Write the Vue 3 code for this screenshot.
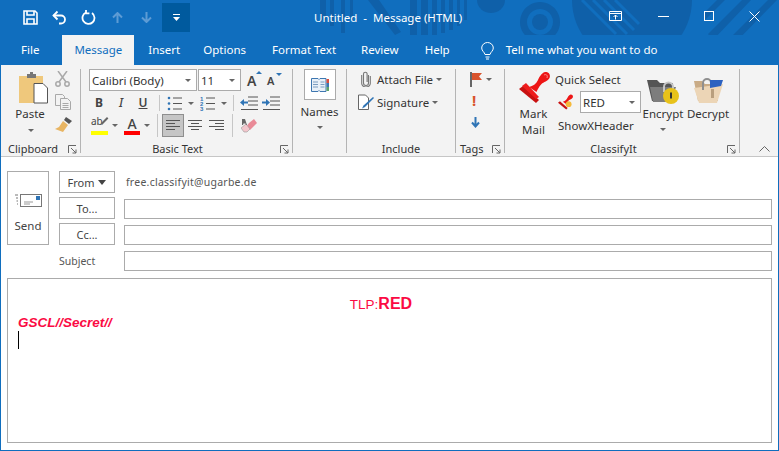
<template>
  <div class="window">
    <header class="titlebar">
      <svg class="pattern" viewBox="0 0 779 65" fill="#0f60a9">
        <rect x="320" y="0" width="6" height="20" />
        <rect x="330" y="0" width="4" height="26" />
        <rect x="341" y="0" width="4" height="33" />
        <rect x="350" y="0" width="3" height="20" />
        <path d="M368 0h11l22 32-6 3z" />
        <rect x="410" y="0" width="7" height="36" />
        <rect x="421" y="0" width="7" height="37" />
        <rect x="432" y="0" width="5" height="35" />
        <rect x="441" y="0" width="4" height="33" />
        <rect x="449" y="0" width="4" height="30" />
        <rect x="457" y="0" width="3" height="26" />
        <rect x="464" y="0" width="3" height="20" />
        <path d="M477 0h28a14 13 0 0 1-28 0z" />
        <path d="M540 2a20 20 0 1 0 .01 0zm0 7a13 13 0 1 1-.01 0z" />
        <circle cx="540" cy="22" r="8" />
        <path d="M572 0h120a60 62 0 0 1-120 0z" />
        <g stroke="#106ebe" stroke-width="3" fill="none">
          <path d="M582 0l34 34M593 0l34 34M604 0l30 30M615 0l24 24" />
        </g>
        <path d="M704 13l13-13h8l-21 21zM708 34l34-34h9l-38 40zM728 40l40-40h9l-44 45z" />
      </svg>

      <div class="qat">
        <svg class="qat-icon" width="15" height="15" viewBox="0 0 15 15" fill="none" stroke="#fff" stroke-width="1.6">
          <path d="M1 1h11l2 2v11H1z" />
          <path d="M4 1v4h7V1M4 14V9h7v5" />
        </svg>
        <svg class="qat-icon" width="15" height="15" viewBox="0 0 15 15" fill="none" stroke="#fff" stroke-width="1.8">
          <path d="M5.500 1.500L1.500 5.500l4 4" />
          <path d="M1.500 5.500h7.500a4 4 0 0 1 0 8h-2" />
        </svg>
        <svg class="qat-icon" width="15" height="15" viewBox="0 0 15 15" fill="none" stroke="#fff" stroke-width="1.8">
          <path d="M5 2.500a6 6 0 1 0 6 .6" />
          <path d="M5 0v3.400h3.400" />
        </svg>
        <svg class="qat-icon dim first-dim" width="11" height="11" viewBox="0 0 11 11" fill="none" stroke="#5d9bd4" stroke-width="2">
          <path d="M1 5.500l4.500-4.500 4.500 4.500M5.500 1v10" />
        </svg>
        <svg class="qat-icon dim" width="11" height="11" viewBox="0 0 11 11" fill="none" stroke="#5d9bd4" stroke-width="2">
          <path d="M1 5.500l4.500 4.500 4.500-4.500M5.500 10V0" />
        </svg>
        <div class="qat-more">
          <svg width="7" height="7" viewBox="0 0 7 7" fill="#fff">
            <rect x="0" y="0" width="7" height="1" />
            <path d="M0 3h7L3.500 7z" />
          </svg>
        </div>
      </div>

      <div class="doc-title">Untitled&nbsp; -&nbsp; Message (HTML)</div>

      <div class="win-controls">
        <svg width="14" height="10" viewBox="0 0 14 10" fill="none" stroke="#fff">
          <path d="M.5.500h12v9H.5zM.5 2.500h12M6.500 8.500V4M4.500 6l2-2 2 2" />
        </svg>
        <svg class="ctrl-min" width="11" height="1" viewBox="0 0 11 1"><rect width="11" height="1" fill="#fff" /></svg>
        <svg class="ctrl-max" width="10" height="10" viewBox="0 0 10 10" fill="none" stroke="#fff"><rect x=".5" y=".5" width="9" height="9" /></svg>
        <svg class="ctrl-close" width="11" height="11" viewBox="0 0 11 11" stroke="#fff"><path d="M.5.500l10 10M10.500.500l-10 10" /></svg>
      </div>
    </header>

    <nav class="tabs">
      <span v-for="t in tabs" :key="t" class="tab" :class="{ active: t === 'Message' }">{{ t }}</span>
      <svg class="bulb" width="13" height="18" viewBox="0 0 13 18" fill="none" stroke="#fff">
        <path d="M4 12.500C3.500 10 .7 9 .7 6a5.800 5.500 0 0 1 11.600 0c0 3-2.800 4-3.300 6.500zM4.500 15h4M5 17h3" />
      </svg>
      <span class="tell">Tell me what you want to do</span>
    </nav>

    <section class="ribbon">
      <!-- Clipboard -->
      <div class="group g-clip">
        <div class="group-body clip-body">
          <div class="paste">
            <svg width="29" height="32" viewBox="0 0 29 32">
              <path d="M0 4h24v27H0z" fill="#efc87c" />
              <path d="M8 2h3V0h3v2h3v4H8z" fill="#777" />
              <path d="M15 11.500h9l4.500 4.500v15H15z" fill="#fff" stroke="#555" />
            </svg>
            <span class="big-label">Paste</span>
            <i class="caret paste-caret"></i>
          </div>
          <div class="clip-tools">
            <svg width="15" height="16" viewBox="0 0 15 16" fill="none" stroke="#a9a9a9" stroke-width="1.500">
              <path d="M3 0l8 11M12 0L4 11" />
              <circle cx="3" cy="13" r="2.200" />
              <circle cx="12" cy="13" r="2.200" />
            </svg>
            <svg width="16" height="16" viewBox="0 0 16 16" fill="#f3f3f3" stroke="#a9a9a9">
              <path d="M.5.500h7l2 2v9h-9z" />
              <path d="M5.500 4.500h7l3 3v8h-10z" />
              <path d="M7.500 9.500h6M7.500 11.500h6M7.500 13.500h6" />
            </svg>
            <svg width="17" height="16" viewBox="0 0 17 16">
              <path d="M11 0l6 4-3 3-5-4z" fill="#555" />
              <path d="M8 4l5 4-5 7-8-3 4-2z" fill="#e8b563" />
            </svg>
          </div>
        </div>
        <div class="group-label">
          <span class="clip-label">Clipboard</span>
          <svg class="launcher" width="9" height="9" viewBox="0 0 9 9" fill="none" stroke="#666"><path d="M.5 8V.5H8M3 3l5 5M4.500 8H8V4.500" /></svg>
        </div>
      </div>

      <!-- Basic Text -->
      <div class="group g-text">
        <div class="group-body text-body">
          <div class="text-row row-font">
            <div class="combo font-combo"><span>Calibri (Body)</span><i class="caret"></i></div>
            <div class="combo size-combo"><span>11</span><i class="caret"></i></div>
            <span class="grow">A<i class="mini-up"></i></span>
            <span class="shrink">A<i class="mini-down"></i></span>
          </div>
          <div class="text-row row-format">
            <b class="fmt">B</b>
            <i class="fmt fmt-i">I</i>
            <u class="fmt fmt-u">U</u>
            <span class="vsep sep-a"></span>
            <svg class="list-ic" width="15" height="15" viewBox="0 0 15 15">
              <g fill="#2f74b5"><circle cx="2" cy="2" r="1.300" /><circle cx="2" cy="7.500" r="1.300" /><circle cx="2" cy="13" r="1.300" /></g>
              <path d="M6 2h9M6 7.500h9M6 13h9" stroke="#555" />
            </svg>
            <i class="caret c-list"></i>
            <svg class="num-ic" width="15" height="15" viewBox="0 0 15 15">
              <g fill="#2f74b5" font-size="6" font-family="Liberation Sans, sans-serif" font-weight="700">
                <text x="0" y="5">1</text>
                <text x="0" y="10">2</text>
                <text x="0" y="15">3</text>
              </g>
              <path d="M6 2h9M6 7.500h9M6 13h9" stroke="#555" />
            </svg>
            <i class="caret c-num"></i>
            <span class="vsep sep-b"></span>
            <svg class="out-ic" width="18" height="15" viewBox="0 0 18 15">
              <path d="M8 1h10M8 5h10M8 9h10M1 13.500h17" stroke="#555" />
              <path d="M0 6.500l4-3.500v2.500h4v2H4V10z" fill="#2f74b5" />
            </svg>
            <svg class="in-ic" width="18" height="15" viewBox="0 0 18 15">
              <path d="M8 1h10M8 5h10M8 9h10M1 13.500h17" stroke="#555" />
              <path d="M8 6.500L4 3v2.500H0v2h4V10z" fill="#2f74b5" />
            </svg>
          </div>
          <div class="text-row row-align">
            <span class="hl-ic">ab<i class="hl-pen"></i><i class="hl-bar"></i></span>
            <i class="caret c-hl"></i>
            <span class="color-ic">A<i class="color-bar"></i></span>
            <i class="caret c-color"></i>
            <span class="vsep sep-c"></span>
            <span class="align-btn">
              <svg width="14" height="11" viewBox="0 0 14 11" stroke="#555"><path d="M0 .5h14M0 3.500h9M0 6.500h14M0 9.500h9" /></svg>
            </span>
            <svg class="al-center" width="14" height="11" viewBox="0 0 14 11" stroke="#555"><path d="M0 .5h14M3 3.500h8M0 6.500h14M3 9.500h8" /></svg>
            <svg class="al-right" width="15" height="11" viewBox="0 0 15 11" stroke="#555"><path d="M0 .5h15M6 3.500h9M0 6.500h15M6 9.500h9" /></svg>
            <span class="vsep sep-d"></span>
            <svg class="eraser" width="16" height="15" viewBox="0 0 16 15">
              <path d="M8 5l5-4 3 4-7 7-4-3z" fill="#e98a97" />
              <path d="M0 10l5-4 4 5-3 3H3z" fill="#f3c6cc" stroke="#999" stroke-width=".6" />
              <path d="M1 1h3l2 6H5L4.500 5.500H2.500L2 7H1z" fill="#666" />
            </svg>
          </div>
        </div>
        <div class="group-label">
          <span class="text-label">Basic Text</span>
          <svg class="launcher" width="9" height="9" viewBox="0 0 9 9" fill="none" stroke="#666"><path d="M.5 8V.5H8M3 3l5 5M4.500 8H8V4.500" /></svg>
        </div>
      </div>

      <!-- Names -->
      <div class="group g-names">
        <div class="group-body names-body">
          <div class="names-btn">
            <svg width="18" height="14" viewBox="0 0 18 14">
              <path d="M.5.500h6.500l1 1 1-1h6v13h-6l-1-1-1 1H.5z" fill="#e8f0f8" stroke="#3d76b0" />
              <path d="M2 4h5M2 6.500h5M2 9h5M9.500 4h4M9.500 6.500h4M9.500 9h4" stroke="#7a9cc0" />
              <rect x="15.500" y="1" width="2.500" height="4" fill="#d94c3d" />
              <rect x="15.500" y="5" width="2.500" height="4" fill="#3d76b0" />
              <rect x="15.500" y="9" width="2.500" height="4" fill="#5fa36b" />
            </svg>
          </div>
          <span class="big-label names-label">Names</span>
          <i class="caret names-caret"></i>
        </div>
        <div class="group-label"></div>
      </div>

      <!-- Include -->
      <div class="group g-include">
        <div class="group-body include-body">
          <div class="inc-row">
            <svg class="clip-ic" width="10" height="16" viewBox="0 0 10 16" fill="none" stroke="#777" stroke-width="1.100">
              <path d="M7.500 4v8a2.500 2.500 0 0 1-5 0V3a1.800 1.800 0 0 1 3.600 0v8" />
              <path d="M9.300 5v7.500a4.300 3.500 0 0 1-8.600 0V4" />
            </svg>
            <span class="inc-text">Attach File</span>
            <i class="caret c-inc"></i>
          </div>
          <div class="inc-row sig-row">
            <svg class="sig-ic" width="16" height="16" viewBox="0 0 16 16">
              <path d="M.5 1h7l3 3v11.500H.5z" fill="#fff" stroke="#666" />
              <path d="M15 3l1 1-9 9-3 1.500L5.500 11.500z" fill="#2f74b5" />
            </svg>
            <span class="inc-text">Signature</span>
            <i class="caret c-inc"></i>
          </div>
        </div>
        <div class="group-label"><span>Include</span></div>
      </div>

      <!-- Tags -->
      <div class="group g-tags">
        <div class="group-body tags-body">
          <div class="flag-row">
            <svg width="13" height="15" viewBox="0 0 13 15">
              <rect width="2" height="15" fill="#666" />
              <path d="M2 1h10L9 4.500 12 8H2z" fill="#d9532c" />
            </svg>
            <i class="caret c-flag"></i>
          </div>
          <span class="bang">!</span>
          <svg class="low" width="9" height="11" viewBox="0 0 9 11" fill="none" stroke="#2f74b5" stroke-width="2">
            <path d="M1 5.500l3.500 4 3.500-4M4.500 9V0" />
          </svg>
        </div>
        <div class="group-label tags-label">
          <span>Tags</span>
          <svg class="launcher" width="9" height="9" viewBox="0 0 9 9" fill="none" stroke="#666"><path d="M.5 8V.5H8M3 3l5 5M4.500 8H8V4.500" /></svg>
        </div>
      </div>

      <!-- ClassifyIt -->
      <div class="group g-classify">
        <div class="group-body classify-body">
          <div class="mark">
            <svg width="31" height="31" viewBox="0 0 31 31">
              <path d="M0 17l4-3 16 14-3 3z" fill="#c81111" />
              <path d="M3 14l4-3 13 14-3 2z" fill="#ee1c1c" />
              <path d="M10 15c4-1 7-3 9-7 1-2 3-7 7-8 3-.5 6 2 4.500 6-1.500 3-6 4-8 6-3 3-4 6-5 8z" fill="#ed1515" />
              <path d="M25 3c2-1 4 0 3 3" stroke="#f88" fill="none" />
            </svg>
            <span class="big-label mark-label">Mark<br />Mail</span>
          </div>
          <div class="quick">
            <span class="quick-title">Quick Select</span>
            <div class="quick-row">
              <svg width="15" height="16" viewBox="0 0 31 31">
                <path d="M0 17l4-3 16 14-3 3z" fill="#c81111" />
                <path d="M10 15c4-1 7-3 9-7 1-2 3-7 7-8 3-.5 6 2 4.500 6-1.500 3-6 4-8 6-3 3-4 6-5 8z" fill="#ed1515" />
                <circle cx="22" cy="20" r="6" fill="#f5b93a" />
              </svg>
              <div class="combo red-combo"><span>RED</span><i class="caret"></i></div>
            </div>
            <span class="xheader">ShowXHeader</span>
          </div>
          <div class="crypt encrypt">
            <svg width="33" height="27" viewBox="0 0 33 27">
              <path d="M0 3h10l3 3h13v18H5z" fill="#555" />
              <path d="M3 10h26l-5 15H6z" fill="#7d7d7d" />
              <path d="M17 15v-5a4.500 4.500 0 0 1 9 0v5" fill="none" stroke="#c5c5c5" stroke-width="2" />
              <circle cx="24" cy="19" r="8" fill="#e8c21a" />
              <rect x="23" y="15.500" width="2" height="6" fill="#333" />
            </svg>
            <span class="big-label">Encrypt</span>
            <i class="caret crypt-caret"></i>
          </div>
          <div class="crypt decrypt">
            <svg width="31" height="27" viewBox="0 0 31 27">
              <path d="M1 4h8l3 3h13v17H5z" fill="#c9ab86" />
              <path d="M1 11l29-4-6 19H6z" fill="#ecd5b6" />
              <path d="M10 13V6a4 4 0 0 1 8 0v3" fill="none" stroke="#8f8f8f" stroke-width="2" />
              <path d="M17 3h13l-2 6-11 2z" fill="#2d62c0" />
              <rect x="18" y="12" width="3" height="9" fill="#b99f7e" />
            </svg>
            <span class="big-label">Decrypt</span>
          </div>
        </div>
        <div class="group-label classify-label">
          <span>ClassifyIt</span>
          <svg class="launcher" width="9" height="9" viewBox="0 0 9 9" fill="none" stroke="#666"><path d="M.5 8V.5H8M3 3l5 5M4.500 8H8V4.500" /></svg>
        </div>
      </div>

      <svg class="collapse" width="11" height="6" viewBox="0 0 11 6" fill="none" stroke="#666"><path d="M.5 5.500l5-5 5 5" /></svg>
    </section>

    <main class="compose">
      <div class="compose-head">
        <button class="send">
          <svg width="27" height="14" viewBox="0 0 27 14">
            <path d="M0 1h3M1 4h2M1.500 7h1.500M2 10h1" stroke="#777" />
            <rect x="5.500" y=".5" width="21" height="12" fill="#fff" stroke="#777" />
            <rect x="21" y="2" width="4" height="4" fill="#2f74b5" />
            <path d="M9 8h9M9 10h6" stroke="#999" />
          </svg>
          <span>Send</span>
        </button>
        <div class="fields">
          <button class="field-btn from-btn">From <i class="from-arrow"></i></button>
          <span class="from-addr">free.classifyit@ugarbe.de</span>
          <button class="field-btn">To...</button>
          <div class="field-input"></div>
          <button class="field-btn">Cc...</button>
          <div class="field-input"></div>
          <span class="subject">Subject</span>
          <div class="field-input"></div>
        </div>
      </div>
      <div class="mail-body">
        <p class="tlp">TLP:<b>RED</b></p>
        <p class="gscl">GSCL//Secret//</p>
        <span class="cursor"></span>
      </div>
    </main>
  </div>
</template>

<script setup>
const tabs = ['File', 'Message', 'Insert', 'Options', 'Format Text', 'Review', 'Help']
</script>

<style>
html, body { margin: 0; background: #fff; }
</style>

<style scoped>
.window {
  width: 779px;
  height: 451px;
  box-sizing: border-box;
  display: flex;
  flex-direction: column;
  border: 1px solid #106ebe;
  border-top: 0;
  font-family: "Noto Sans", "Open Sans", sans-serif;
  font-size: 11.5px;
  color: #333;
  overflow: hidden;
}

/* title bar */
.titlebar {
  position: relative;
  height: 35px;
  margin: 0 -1px;
  background: #106ebe;
  display: flex;
  align-items: flex-start;
  color: #fff;
}
.pattern {
  position: absolute;
  left: 0;
  top: 0;
  width: 779px;
  height: 65px;
}
.qat {
  position: relative;
  display: flex;
  align-items: center;
  height: 29px;
  margin-top: 3px;
  padding-left: 23px;
}
.qat-icon { margin-right: 14px; }
.qat-icon.first-dim { margin-left: 2px; margin-right: 18px; }
.qat-icon.dim:not(.first-dim) { margin-right: 10px; }
.qat-more {
  width: 28px;
  height: 29px;
  background: #005a9e;
  display: flex;
  align-items: center;
  justify-content: center;
}
.doc-title {
  position: relative;
  margin-left: 124px;
  line-height: 36px;
  font-size: 11.5px;
  white-space: nowrap;
}
.win-controls {
  position: relative;
  margin-left: auto;
  display: flex;
  align-items: flex-start;
  padding: 11px 19px 0 0;
}
.ctrl-min { margin: 5px 0 0 35px; }
.ctrl-max { margin-left: 35px; }
.ctrl-close { margin-left: 35px; }

/* tabs */
.tabs {
  position: relative;
  height: 30px;
  margin: 0 -1px;
  background: #106ebe;
  display: flex;
  align-items: stretch;
  padding-left: 8px;
  color: #fff;
  white-space: nowrap;
}
.tab {
  padding: 0 13px;
  line-height: 30px;
  font-size: 11.5px;
}
.tab:nth-child(1) { margin-right: 10px; }
.tab:nth-child(2) { padding: 0 12px; }
.tab:nth-child(3) { padding: 0 10px 0 14px; }
.tab:nth-child(5) { padding-right: 12px; }
.tab.active {
  background: #f3f3f3;
  color: #106ebe;
}
.bulb { margin: 7px 0 0 18px; }
.tell {
  margin-left: 12px;
  line-height: 30px;
  font-size: 11.5px;
}

/* ribbon */
.ribbon {
  position: relative;
  height: 92px;
  flex: none;
  box-sizing: border-box;
  display: flex;
  padding-top: 4px;
  background: #f3f3f3;
  border-bottom: 1px solid #c6c6c6;
}
.group {
  box-sizing: border-box;
  height: 84px;
  border-right: 1px solid #b4b4b4;
  display: flex;
  flex-direction: column;
  flex: none;
}
.g-clip { width: 80px; }
.g-text { width: 212px; }
.g-names { width: 54px; }
.g-include { width: 109px; }
.g-tags { width: 49px; }
.g-classify { width: 235px; }
.group-body { height: 70px; flex: none; box-sizing: border-box; }
.group-label {
  position: relative;
  height: 20px;
  line-height: 20px;
  text-align: center;
  font-size: 11px;
  white-space: nowrap;
}
.launcher {
  position: absolute;
  right: 3px;
  top: 6px;
}
.big-label {
  display: block;
  text-align: center;
  white-space: nowrap;
  line-height: 16px;
}
.caret {
  display: inline-block;
  width: 0;
  height: 0;
  border-left: 3px solid transparent;
  border-right: 3px solid transparent;
  border-top: 3px solid #666;
}

/* clipboard */
.clip-body { display: flex; padding-left: 17px; }
.paste {
  width: 30px;
  display: flex;
  flex-direction: column;
  align-items: center;
  padding-top: 3px;
}
.paste .big-label { margin-top: 2px; margin-left: -6px; }
.paste-caret { margin: 7px 0 0 -4px; }
.clip-tools {
  display: flex;
  flex-direction: column;
  gap: 7px;
  margin-left: 7px;
  padding-top: 2px;
}
.clip-label { position: absolute; left: 7px; }

/* basic text */
.text-body { padding-left: 8px; }
.text-row { display: flex; align-items: center; }
.row-font { height: 22px; }
.combo {
  box-sizing: border-box;
  display: flex;
  align-items: center;
  justify-content: space-between;
  background: #fff;
  border: 1px solid #ababab;
  padding: 0 5px 0 2px;
  height: 22px;
  font-size: 11.5px;
}
.font-combo { width: 108px; margin-right: 1px; }
.size-combo { width: 43px; }
.grow, .shrink {
  position: relative;
  color: #444;
  font-weight: 600;
}
.grow { margin-left: 6px; font-size: 14px; width: 20px; }
.shrink { font-size: 11px; width: 15px; }
.mini-up, .mini-down {
  position: absolute;
  top: 0;
  left: 9px;
  width: 0;
  height: 0;
  border-left: 3px solid transparent;
  border-right: 3px solid transparent;
}
.mini-up { border-bottom: 3px solid #2f74b5; }
.mini-down { border-top: 3px solid #2f74b5; }

.row-format { height: 16px; margin-top: 4px; }
.fmt {
  width: 20px;
  margin-right: 2px;
  text-align: center;
  font-size: 12px;
  line-height: 16px;
  color: #444;
  font-weight: 700;
  font-style: normal;
}
.fmt-i { font-style: italic; font-weight: 500; }
.fmt-u { font-weight: 600; }
.vsep {
  width: 1px;
  background: #c6c6c6;
  align-self: stretch;
  flex: none;
}
.sep-a { margin-left: 4px; }
.list-ic { margin-left: 7px; }
.c-list { margin-left: 6px; }
.num-ic { margin-left: 6px; }
.c-num { margin-left: 6px; }
.sep-b { margin-left: 6px; }
.out-ic { margin-left: 6px; }
.in-ic { margin-left: 4px; }

.row-align { height: 23px; margin-top: 3px; }
.hl-ic {
  position: relative;
  width: 17px;
  height: 19px;
  margin-left: 2px;
  font-size: 10px;
  line-height: 11px;
  color: #444;
}
.hl-pen {
  position: absolute;
  left: 9px;
  top: 4px;
  width: 9px;
  height: 2px;
  background: #666;
  transform: rotate(-45deg);
}
.hl-bar, .color-bar {
  position: absolute;
  left: 0;
  bottom: 0;
  height: 4px;
}
.hl-bar { width: 17px; background: #ffff00; }
.color-ic {
  position: relative;
  width: 16px;
  height: 19px;
  margin-left: 6px;
  text-align: center;
  font-size: 14px;
  line-height: 16px;
  font-weight: 500;
  color: #444;
}
.color-bar { width: 16px; background: #ff0000; }
.c-hl { margin-left: 4px; }
.c-color { margin-left: 4px; }
.sep-c { margin-left: 7px; }
.align-btn {
  box-sizing: border-box;
  width: 22px;
  height: 23px;
  margin-left: 4px;
  background: #c5c5c5;
  border: 1px solid #8e8e8e;
  display: flex;
  align-items: center;
  justify-content: center;
}
.al-center { margin-left: 4px; }
.al-right { margin-left: 7px; }
.sep-d { margin-left: 8px; }
.eraser { margin-left: 8px; }
.text-label { margin-left: -18px; }

/* names */
.names-body {
  display: flex;
  flex-direction: column;
  align-items: center;
}
.names-btn {
  box-sizing: border-box;
  width: 32px;
  height: 31px;
  background: #fff;
  border: 1px solid #ababab;
  display: flex;
  align-items: center;
  justify-content: center;
}
.names-label { margin-top: 4px; }
.names-caret { margin-top: 6px; }

/* include */
.include-body { padding: 2px 0 0 11px; }
.inc-row { display: flex; align-items: center; height: 16px; }
.sig-row { margin-top: 7px; }
.clip-ic { margin-left: 3px; }
.sig-ic { margin-right: 3px; }
.inc-text { margin-left: 7px; white-space: nowrap; }
.sig-row .inc-text { margin-left: 0; }
.clip-ic + .inc-text { margin-left: 6px; }
.c-inc { margin-left: 3px; }

/* tags */
.tags-body {
  display: flex;
  flex-direction: column;
  align-items: flex-start;
  padding: 3px 0 0 14px;
}
.flag-row { display: flex; align-items: center; }
.c-flag { margin-left: 3px; }
.bang {
  margin: 5px 0 0 2px;
  height: 16px;
  line-height: 16px;
  font-size: 15px;
  font-weight: 700;
  color: #d9532c;
}
.low { margin: 9px 0 0 1px; }
.tags-label { text-align: left; padding-left: 4px; }

/* classifyit */
.classify-body { display: flex; position: relative; }
.mark {
  width: 50px;
  padding-left: 14px;
  box-sizing: border-box;
  padding-top: 3px;
}
.mark svg { display: block; }
.mark-label { margin: 3px 0 0 -1px; width: 31px; }
.quick { width: 88px; display: flex; flex-direction: column; }
.quick-title { line-height: 16px; margin-top: 3px; white-space: nowrap; }
.quick-row { display: flex; align-items: center; height: 22px; margin-top: 3px; padding-left: 3px; }
.red-combo { width: 61px; margin-left: 7px; flex: none; }
.xheader { margin: 5px 0 0 3px; line-height: 16px; white-space: nowrap; }
.crypt {
  display: flex;
  flex-direction: column;
  align-items: center;
  padding-top: 8px;
  width: 44px;
}
.encrypt { margin-left: -2px; }
.decrypt { margin-left: 1px; }
.crypt .big-label { margin-top: 2px; }
.crypt-caret { margin-top: 6px; }
.classify-label { padding-right: 17px; box-sizing: border-box; }

.collapse {
  position: absolute;
  right: 8px;
  bottom: 4px;
}

/* compose */
.compose {
  flex: 1;
  display: flex;
  flex-direction: column;
  padding: 14px 6px 7px 6px;
  min-height: 0;
  background: #fff;
}
.compose-head { display: flex; flex: none; }
.send {
  box-sizing: border-box;
  width: 42px;
  height: 74px;
  padding: 0;
  background: #fff;
  border: 1px solid #ababab;
  font: inherit;
  color: #444;
  display: flex;
  flex-direction: column;
  align-items: center;
  padding-top: 22px;
  gap: 10px;
}
.fields {
  flex: 1;
  margin-left: 10px;
  display: grid;
  grid-template-columns: 56px 1fr;
  grid-auto-rows: 22px;
  column-gap: 9px;
  row-gap: 4px;
  align-items: end;
}
.field-btn {
  box-sizing: border-box;
  height: 22px;
  padding: 0;
  background: #fff;
  border: 1px solid #ababab;
  font: inherit;
  font-size: 11px;
  color: #444;
}
.from-arrow {
  display: inline-block;
  width: 0;
  height: 0;
  margin-left: 1px;
  vertical-align: 2px;
  border-left: 4px solid transparent;
  border-right: 4px solid transparent;
  border-top: 5px solid #444;
}
.from-addr {
  align-self: center;
  margin: 0 0 0 2px;
  font-size: 10.5px;
  letter-spacing: 0.25px;
  color: #555;
  white-space: nowrap;
}
.field-input {
  box-sizing: border-box;
  height: 20px;
  background: #fff;
  border: 1px solid #ababab;
}
.subject {
  align-self: center;
  font-size: 10.5px;
  color: #555;
  padding-top: 2px;
}
.mail-body {
  flex: 1;
  margin-top: 7px;
  box-sizing: border-box;
  border: 1px solid #ababab;
  padding: 15px 10px 0;
  font-family: "Liberation Sans", Arial, sans-serif;
  color: #fb0a43;
}
.tlp {
  margin: 0;
  padding-right: 17px;
  text-align: center;
  font-size: 13.5px;
  line-height: 19px;
}
.tlp b { font-size: 16px; }
.gscl {
  margin: 0;
  font-size: 13.5px;
  font-weight: 700;
  font-style: italic;
  line-height: 17px;
}
.cursor {
  display: block;
  width: 1px;
  height: 18px;
  background: #000;
}
</style>
